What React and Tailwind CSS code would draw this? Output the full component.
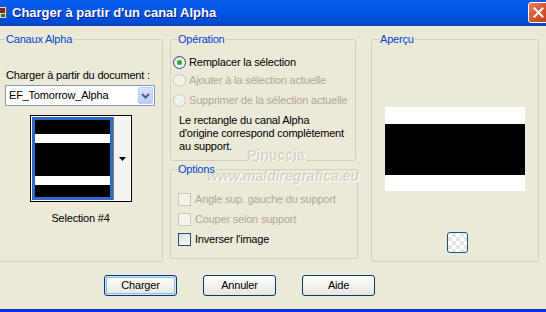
import React from "react";

// Windows XP style "Charger à partir d'un canal Alpha" dialog

function Radio({ checked, disabled, label }) {
  return (
    <div className="flex h-[14px] items-center gap-[3px] pl-[2px]">
      <span
        className={
          "flex h-[13px] w-[13px] items-center justify-center rounded-full border " +
          (disabled
            ? "border-[#CAC8BB] bg-[#F2F1EA]"
            : "border-[#1C5180] bg-gradient-to-br from-[#DCDBD5] to-white")
        }
      >
        {checked && (
          <span className="h-[5px] w-[5px] rounded-full bg-[#21A121] shadow-[inset_0_0_0_1px_#4CC34C]" />
        )}
      </span>
      <span className={disabled ? "text-[#ACA899]" : "text-black"}>{label}</span>
    </div>
  );
}

function Check({ disabled, label }) {
  return (
    <div className="flex h-[13px] items-center gap-[4px] pl-[7px]">
      <span
        className={
          "h-[13px] w-[13px] border " +
          (disabled
            ? "border-[#CAC8BB] bg-[#F4F3EE]"
            : "border-[#1C5180] bg-gradient-to-br from-[#DCDBD3] to-white")
        }
      />
      <span className={disabled ? "text-[#ACA899]" : "text-black"}>{label}</span>
    </div>
  );
}

function XpButton({ label, isDefault }) {
  return (
    <button
      type="button"
      className={
        "h-[21px] w-[73px] rounded-[3px] border border-[#003C74] bg-gradient-to-b from-white to-[#E6E5DE] text-[11px] leading-[13px] tracking-[-0.2px] text-black " +
        (isDefault ? "shadow-[inset_0_0_0_1px_#CEE7FF,inset_0_0_0_2px_#98B8EA]" : "")
      }
    >
      {label}
    </button>
  );
}

export default function App() {
  return (
    <div className="flex h-[312px] w-[546px] flex-col overflow-hidden bg-[#ECE9D8] font-['Liberation_Sans',Arial,sans-serif] text-[11px] leading-[13px] tracking-[-0.2px] text-black">
      {/* ── Title bar ───────────────────────────────────── */}
      <div className="relative flex h-[26px] items-center bg-gradient-to-b from-[#0A5EEB] via-[#0055E5] to-[#0047C8]">
        <svg width="8" height="14" viewBox="0 0 8 14" className="shrink-0">
          <rect x="0" y="1" width="7" height="11" fill="#D8D4C4" />
          <rect x="0" y="2" width="5" height="5" fill="#7A2E1A" />
          <rect x="1" y="8" width="4" height="3" fill="#3B6E3B" />
          <rect x="6" y="1" width="1" height="11" fill="#5A5A5A" />
        </svg>
        <span className="ml-[4px] text-[13px] font-bold leading-[16px] tracking-normal text-white [text-shadow:1px_1px_0_#0A1E8C]">
          Charger à partir d'un canal Alpha
        </span>
        <div className="absolute left-[528px] top-[2px] flex h-[21px] w-[21px] items-center justify-center rounded-[3px] border border-white bg-gradient-to-br from-[#E8825F] via-[#D8552F] to-[#C23D17]">
          <svg width="11" height="11" viewBox="0 0 11 11">
            <path d="M1.5 1.5 L9.5 9.5 M9.5 1.5 L1.5 9.5" stroke="white" strokeWidth="2" strokeLinecap="square" />
          </svg>
        </div>
      </div>

      {/* ── Body ────────────────────────────────────────── */}
      <div className="relative flex flex-1 flex-col pt-[7px]">
        <div className="flex items-start">
          {/* Canaux Alpha */}
          <fieldset className="ml-[-2px] h-[229px] w-[165px] rounded-[3px] border border-[#D0D0BF]">
            <legend className="ml-[6px] px-[1px] text-[#0046D5]">Canaux Alpha</legend>
            <div className="mt-[23px] pl-[7px]">Charger à partir du document :</div>
            <div className="ml-[6px] mt-[3px] flex h-[21px] w-[150px] items-center border border-[#7F9DB9] bg-white pl-[3px] pr-[1px]">
              <span className="flex-1">EF_Tomorrow_Alpha</span>
              <span className="flex h-[17px] w-[15px] items-center justify-center rounded-[2px] border border-[#B9CEF8] bg-gradient-to-b from-[#D8E4FD] to-[#B6CCF9]">
                <svg width="9" height="6" viewBox="0 0 9 6">
                  <path d="M1 1 L4.5 4.5 L8 1" fill="none" stroke="#4D6185" strokeWidth="2" />
                </svg>
              </span>
            </div>
            <div className="ml-[31px] mt-[9px] flex h-[87px] w-[102px] border border-black bg-white p-[1px]">
              <div className="flex w-[81px] flex-col border-[3px] border-[#316AC5]">
                <div className="h-[14px] bg-black" />
                <div className="h-[9px] bg-white" />
                <div className="flex-1 bg-black" />
                <div className="h-[9px] bg-white" />
                <div className="h-[12px] bg-black" />
              </div>
              <div className="flex flex-1 items-center justify-center border-l border-[#808080] bg-[#F4F3EE]">
                <svg width="7" height="4" viewBox="0 0 7 4">
                  <path d="M0 0 H7 L3.5 4 Z" fill="black" />
                </svg>
              </div>
            </div>
            <div className="mt-[10px] text-center">Selection #4</div>
          </fieldset>

          {/* Opération + Options */}
          <div className="ml-[7px] flex w-[188px] flex-col">
            <fieldset className="h-[128px] w-[186px] rounded-[3px] border border-[#D0D0BF]">
              <legend className="ml-[6px] px-[1px] text-[#0046D5]">Opération</legend>
              <div className="mt-[9px]">
                <Radio checked label="Remplacer la sélection" />
              </div>
              <div className="mt-[4px]">
                <Radio disabled label="Ajouter à la sélection actuelle" />
              </div>
              <div className="mt-[6px]">
                <Radio disabled label="Supprimer de la sélection actuelle" />
              </div>
              <p className="mt-[7px] pl-[8px]">
                Le rectangle du canal Alpha
                <br />
                d'origine correspond complètement
                <br />
                au support.
              </p>
            </fieldset>
            <fieldset className="mt-[2px] h-[96px] w-[188px] rounded-[3px] border border-[#D0D0BF]">
              <legend className="ml-[6px] px-[1px] text-[#0046D5]">Options</legend>
              <div className="mt-[17px] flex flex-col gap-[7px]">
                <Check disabled label="Angle sup. gauche du support" />
                <Check disabled label="Couper selon support" />
                <Check label="Inverser l'image" />
              </div>
            </fieldset>
          </div>

          {/* Aperçu */}
          <fieldset className="ml-[13px] h-[229px] w-[168px] rounded-[3px] border border-[#D0D0BF]">
            <legend className="ml-[7px] px-[1px] text-[#0046D5]">Aperçu</legend>
            <div className="ml-[13px] mt-[61px] flex h-[84px] w-[140px] flex-col">
              <div className="h-[17px] bg-white" />
              <div className="flex-1 bg-black" />
              <div className="h-[16px] bg-white" />
            </div>
            <div className="ml-[75px] mt-[41px] h-[21px] w-[21px] rounded-[3px] border border-[#1C5180] bg-[repeating-conic-gradient(#E4E4E4_0_25%,#FFFFFF_0_50%)] bg-[length:8px_8px]" />
          </fieldset>
        </div>

        {/* Buttons */}
        <div className="mt-[13px] flex gap-[26px] pl-[104px]">
          <XpButton label="Charger" isDefault />
          <XpButton label="Annuler" />
          <XpButton label="Aide" />
        </div>

        {/* Watermark over the dialog */}
        <div className="pointer-events-none absolute left-[247px] top-[121px] text-[14px] font-bold leading-[16px] tracking-normal text-[#CFCBBE]/80 [text-shadow:1px_1px_0_#FFFFFF]">
          Pinuccia
        </div>
        <div className="pointer-events-none absolute left-[207px] top-[142px] text-[14px] font-bold italic leading-[16px] tracking-normal text-[#CFCBBE]/80 [text-shadow:1px_1px_0_#FFFFFF]">
          www.maldiregrafica.eu
        </div>
      </div>

      <div className="h-[3px] bg-[#0831D9]" />
    </div>
  );
}
